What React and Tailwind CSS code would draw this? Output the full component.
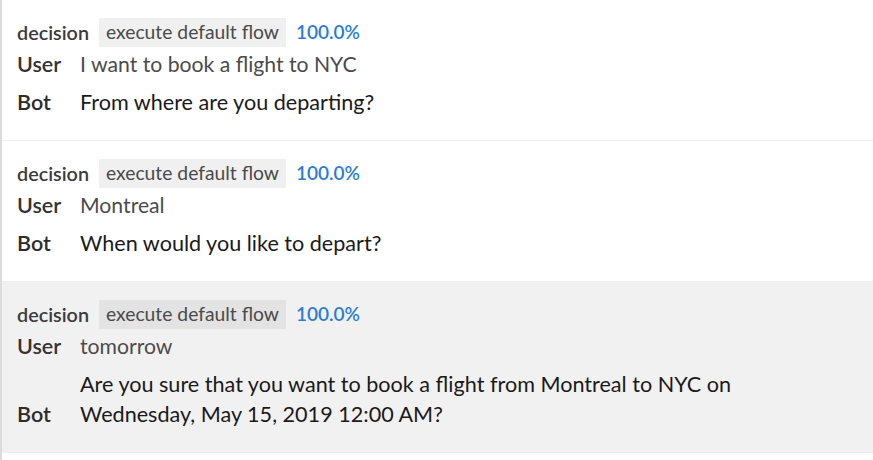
import React from "react";

const turns = [
  {
    user: "I want to book a flight to NYC",
    bot: "From where are you departing?",
  },
  {
    user: "Montreal",
    bot: "When would you like to depart?",
  },
  {
    user: "tomorrow",
    bot: "Are you sure that you want to book a flight from Montreal to NYC on Wednesday, May 15, 2019 12:00 AM?",
    active: true,
  },
];

function Turn({ user, bot, active }) {
  return (
    <div
      className={
        "border-b border-[#ededed] pl-[15px] pt-[18px] pb-[23px] " +
        (active ? "bg-[#f2f1f2]" : "bg-white")
      }
    >
      {/* decision row */}
      <div className="flex items-center h-[29px]">
        <span className="w-[82px] text-[19.8px] font-semibold text-[#3b3b3b]">decision</span>
        <span
          className={
            "h-[29px] px-[7px] flex items-center text-[19.3px] text-[#4a4a4a] " +
            (active ? "bg-[#e3e3e3]" : "bg-[#f0f0f0]")
          }
        >
          execute default flow
        </span>
        <span className="ml-[10px] text-[19px] font-semibold text-[#2b7dd2]">100.0%</span>
      </div>

      {/* user row */}
      <div className="flex items-end mt-[2px] leading-[30px]">
        <span className="w-[63px] shrink-0 text-[21.5px] font-semibold text-[#333]">User</span>
        <span className="text-[21.2px] text-[#4b4b4b]">{user}</span>
      </div>

      {/* bot row */}
      <div className="flex items-end mt-[8px] leading-[30px]">
        <span className="w-[63px] shrink-0 text-[21.5px] font-semibold text-[#2c2c2c]">Bot</span>
        <span className="max-w-[690px] text-[21.6px] text-[#1a1a1a]">{bot}</span>
      </div>
    </div>
  );
}

export default function App() {
  return (
    <div
      className="w-[873px] h-[460px] bg-white border-l-2 border-[#dcdcdc] overflow-hidden"
      style={{ fontFamily: "Lato, 'Open Sans', sans-serif" }}
    >
      {turns.map((t, i) => (
        <Turn key={i} {...t} />
      ))}
    </div>
  );
}
